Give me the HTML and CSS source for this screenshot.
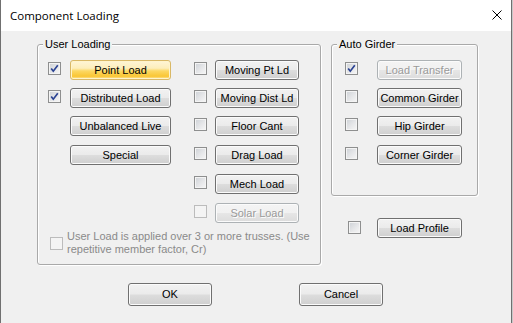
FILE: index.html
```html
<!DOCTYPE html>
<html>
<head>
<meta charset="utf-8">
<link rel="stylesheet" href="styles.css">
</head>
<body>
<div class="window">
  <div class="titlebar">
    <span class="title">Component Loading</span>
    <svg class="close" width="10" height="10" viewBox="0 0 10 10"><path d="M0.5 0.5 L9.5 9.5 M9.5 0.5 L0.5 9.5" stroke="#000" stroke-width="1" fill="none"/></svg>
  </div>
  <div class="content">
    <div class="main">
      <fieldset class="group user">
        <legend>User Loading</legend>
        <div class="grid">
          <div class="opt c1 r1"><span class="cb checked"><svg width="11" height="11" viewBox="0 0 11 11"><path d="M2.2 5.4 L4.3 8.2 L8.8 2.3" stroke="#2b4393" stroke-width="1.7" fill="none"/></svg></span><button class="btn w101 hot">Point Load</button></div>
          <div class="opt c1 r2"><span class="cb checked"><svg width="11" height="11" viewBox="0 0 11 11"><path d="M2.2 5.4 L4.3 8.2 L8.8 2.3" stroke="#2b4393" stroke-width="1.7" fill="none"/></svg></span><button class="btn w101">Distributed Load</button></div>
          <div class="opt c1 r3"><span class="cb blank"></span><button class="btn w101">Unbalanced Live</button></div>
          <div class="opt c1 r4"><span class="cb blank"></span><button class="btn w101">Special</button></div>

          <div class="opt c2 r1"><span class="cb"></span><button class="btn w84">Moving Pt Ld</button></div>
          <div class="opt c2 r2"><span class="cb"></span><button class="btn w84">Moving Dist Ld</button></div>
          <div class="opt c2 r3"><span class="cb"></span><button class="btn w84">Floor Cant</button></div>
          <div class="opt c2 r4"><span class="cb"></span><button class="btn w84">Drag Load</button></div>
          <div class="opt c2 r5"><span class="cb"></span><button class="btn w84">Mech Load</button></div>
          <div class="opt c2 r6"><span class="cb disabled"></span><button class="btn w84 dis">Solar Load</button></div>
        </div>
        <div class="note">
          <span class="cb disabled"></span>
          <span class="note-text">User Load is applied over 3 or more trusses. (Use repetitive member factor, Cr)</span>
        </div>
      </fieldset>
      <div class="side">
        <fieldset class="group auto">
          <legend>Auto Girder</legend>
          <div class="agrid">
            <div class="opt a r1"><span class="cb checked"><svg width="11" height="11" viewBox="0 0 11 11"><path d="M2.2 5.4 L4.3 8.2 L8.8 2.3" stroke="#2b4393" stroke-width="1.7" fill="none"/></svg></span><button class="btn w85 dis">Load Transfer</button></div>
            <div class="opt a r2"><span class="cb"></span><button class="btn w85">Common Girder</button></div>
            <div class="opt a r3"><span class="cb"></span><button class="btn w85">Hip Girder</button></div>
            <div class="opt a r4"><span class="cb"></span><button class="btn w85">Corner Girder</button></div>
          </div>
        </fieldset>
        <div class="opt profile"><span class="cb"></span><button class="btn w85">Load Profile</button></div>
      </div>
    </div>
    <div class="actions">
      <button class="btn big">OK</button>
      <button class="btn big">Cancel</button>
    </div>
  </div>
</div>
</body>
</html>
```
FILE: styles.css
```css
html, body {
  margin: 0;
  padding: 0;
  background: #c8c8c8;
  width: 513px;
  height: 323px;
  overflow: hidden;
}

.window {
  width: 510px;
  height: 323px;
  border-left: 1px solid #707070;
  border-right: 1px solid #707070;
  background: #f0f0f0;
  display: flex;
  flex-direction: column;
  font-family: "Liberation Sans", Arial, sans-serif;
  font-size: 11px;
  color: #000;
}

.titlebar {
  height: 31px;
  flex: none;
  background: #fff;
  display: flex;
  align-items: center;
  justify-content: space-between;
  padding-left: 9px;
  padding-right: 9px;
}

.title {
  font-family: "Open Sans", "Noto Sans", sans-serif;
  font-size: 11.5px;
  color: #000;
}

.close {
  display: block;
  margin-top: -1px;
}

.content {
  padding-left: 36px;
}

.main {
  display: flex;
  gap: 10px;
  margin-top: 7px;
}

.group {
  margin: 0;
  padding: 9px 0 0 0;
  box-sizing: border-box;
  border: 1px solid #a9a9a9;
  border-radius: 3px;
  box-shadow: 1px 1px 0 #fff, inset 1px 1px 0 #fff;
  min-width: 0;
}

.group legend {
  padding: 0 2px;
  line-height: 13px;
  background: #f0f0f0;
  font-size: 11px;
}

.user {
  width: 284px;
  height: 227px;
  padding-left: 10px;
}

.user legend {
  margin-left: -5px;
}

.grid {
  display: grid;
  grid-template-columns: 123px 105px;
  grid-template-rows: 28px 28px 29px 29px 29px 20px;
  column-gap: 23px;
}

.opt {
  display: flex;
  align-items: flex-start;
  gap: 9px;
}

.c1 { grid-column: 1; }
.c2 { grid-column: 2; gap: 8px; }
.r1 { grid-row: 1; }
.r2 { grid-row: 2; }
.r3 { grid-row: 3; }
.r4 { grid-row: 4; }
.r5 { grid-row: 5; }
.r6 { grid-row: 6; }

.cb {
  flex: none;
  width: 13px;
  height: 13px;
  box-sizing: border-box;
  margin-top: 2px;
  border: 1px solid #8e8f8f;
  background: linear-gradient(135deg, #cdd1d6 0%, #e6e7e9 55%, #f7f7f7 100%);
  box-shadow: inset 0 0 0 1px #f4f4f4;
  display: flex;
  align-items: center;
  justify-content: center;
}

.cb svg { display: block; }

.cb.blank {
  visibility: hidden;
}

.cb.disabled {
  border-color: #bcbcbc;
  background: #f4f4f4;
  box-shadow: none;
}

.btn {
  flex: none;
  height: 20px;
  box-sizing: border-box;
  margin: 0;
  padding: 0;
  border: 1px solid #707070;
  border-radius: 3px;
  background: linear-gradient(#f2f2f2 0%, #ebebeb 48%, #dddddd 52%, #cfcfcf 100%);
  box-shadow: inset 0 0 0 1px #fbfbfb;
  font-family: "Liberation Sans", Arial, sans-serif;
  font-size: 11px;
  color: #000;
  text-align: center;
  line-height: 18px;
}

.w101 { width: 101px; }
.w84 { width: 84px; }
.w85 { width: 85px; }

.btn.hot {
  border-color: #d9b866;
  background: linear-gradient(#fff5d6 0%, #fdeebb 40%, #fcd863 55%, #fac634 85%, #fde9a8 100%);
  box-shadow: inset 0 0 0 1px #fff4cc;
}

.btn.dis {
  border-color: #adb2b5;
  background: linear-gradient(#f4f4f4 0%, #f1f1f1 48%, #e6e6e6 52%, #dcdcdc 100%);
  color: #9a9a9a;
  text-shadow: 1px 1px 0 #ffffff;
}

.note {
  display: flex;
  align-items: center;
  gap: 4px;
  margin-top: 7px;
  padding-left: 2px;
  color: #8a8a8a;
  line-height: 13px;
}

.note .cb {
  margin-top: 0;
  margin-left: 0;
}

.note-text {
  width: 250px;
}

.side {
  display: flex;
  flex-direction: column;
}

.auto {
  width: 147px;
  height: 158px;
  padding-left: 13px;
}

.auto legend {
  margin-left: -8px;
}

.agrid {
  display: grid;
  grid-template-rows: 28px 28px 29px 20px;
}

.a { gap: 19px; }

.profile {
  margin-top: 22px;
  padding-left: 17px;
  gap: 16px;
}

.profile .cb {
  margin-top: 3px;
}

.actions {
  display: flex;
  gap: 87px;
  margin-top: 18px;
  padding-left: 91px;
}

.btn.big {
  width: 84px;
  height: 23px;
  line-height: 21px;
}
```
